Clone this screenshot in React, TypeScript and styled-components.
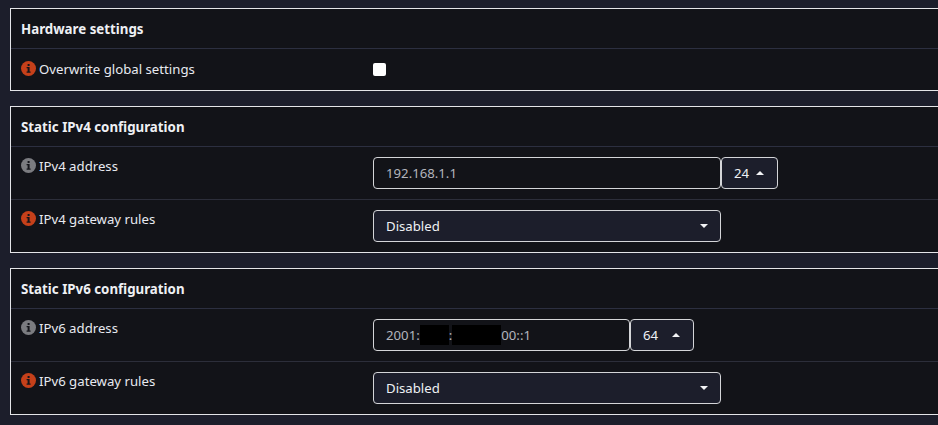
import styled, { createGlobalStyle } from "styled-components";

const GlobalStyle = createGlobalStyle`
  html, body {
    margin: 0;
    height: 100%;
    overflow: hidden;
    background: #1c1e2b;
  }
  body {
    font-family: "Noto Sans", "Open Sans", sans-serif;
    font-size: 13.2px;
    color: #e8eaf0;
  }
`;

const Page = styled.div`
  box-sizing: border-box;
  display: flex;
  flex-direction: column;
  gap: 15px;
  width: 100%;
  padding: 8px 0 0 10px;
`;

const Card = styled.section`
  background: #121318;
  border: 1px solid #e4e5e8;
  border-right: 0;
`;

const CardTitle = styled.h3`
  box-sizing: border-box;
  margin: 0;
  height: 40px;
  padding: 1px 10px 0;
  display: flex;
  align-items: center;
  font-size: 13.3px;
  font-weight: 700;
  color: #eef0f4;
  border-bottom: 1px solid #2c2f40;
`;

const Row = styled.div<{ $divided?: boolean }>`
  display: grid;
  grid-template-columns: 352px 1fr;
  padding: 10px;
  border-top: ${(p) => (p.$divided ? "1px solid #2c2e3a" : "0")};
`;

const Label = styled.div<{ $centered?: boolean }>`
  display: flex;
  align-items: flex-start;
  gap: 3px;
  line-height: 18px;
  color: #e8eaf0;
  padding-top: ${(p) => (p.$centered ? "1px" : "0")};
`;

const Badge = styled.svg`
  flex: none;
  width: 15px;
  height: 15px;
  margin-top: 1px;
`;

const Field = styled.div`
  display: flex;
  align-items: center;
`;

const Check = styled.span`
  display: block;
  width: 13px;
  height: 13px;
  margin: 4px 0;
  background: #ffffff;
  border-radius: 2px;
`;

const TextBox = styled.div<{ $width: number }>`
  box-sizing: border-box;
  width: ${(p) => p.$width}px;
  height: 32px;
  padding: 0 12px;
  display: flex;
  align-items: center;
  color: #b2b5bd;
  border: 1px solid #d4d5d8;
  border-radius: 4px;
`;

const Redacted = styled.span<{ $width: number }>`
  display: inline-block;
  width: ${(p) => p.$width}px;
  height: 20px;
  background: #000000;
`;

const Prefix = styled.button<{ $width: number }>`
  box-sizing: border-box;
  width: ${(p) => p.$width}px;
  height: 32px;
  padding: 0 13px 0 12px;
  display: flex;
  align-items: center;
  justify-content: space-between;
  font: inherit;
  color: #eef0f4;
  background: #1c1e2b;
  border: 1px solid #d4d5d8;
  border-radius: 4px;
`;

const Select = styled.button`
  box-sizing: border-box;
  width: 348px;
  height: 32px;
  padding: 0 12px;
  display: flex;
  align-items: center;
  justify-content: space-between;
  font: inherit;
  color: #eef0f4;
  background: #1c1e2b;
  border: 1px solid #d4d5d8;
  border-radius: 4px;
`;

const Caret = styled.span<{ $up?: boolean }>`
  width: 0;
  height: 0;
  border-left: 4px solid transparent;
  border-right: 4px solid transparent;
  ${(p) => (p.$up ? "border-bottom: 4px solid #f2f3f5;" : "border-top: 4px solid #f2f3f5;")}
`;

const InfoIcon = ({ color }: { color: string }) => (
  <Badge viewBox="0 0 15 15">
    <circle cx="7.5" cy="7.5" r="7.5" fill={color} />
    <rect x="6.6" y="3" width="2" height="2" fill="#14151a" />
    <path d="M5.6 6.1h3v4.4h1v1.2H5.6v-1.2h1V7.3h-1z" fill="#14151a" />
  </Badge>
);

const RED = "#c5401a";
const GREY = "#7b7c80";

export default function App() {
  return (
    <>
      <GlobalStyle />
      <Page>
        <Card>
          <CardTitle>Hardware settings</CardTitle>
          <Row>
            <Label $centered>
              <InfoIcon color={RED} />
              Overwrite global settings
            </Label>
            <Field>
              <Check />
            </Field>
          </Row>
        </Card>

        <Card>
          <CardTitle>Static IPv4 configuration</CardTitle>
          <Row>
            <Label>
              <InfoIcon color={GREY} />
              IPv4 address
            </Label>
            <Field>
              <TextBox $width={348}>192.168.1.1</TextBox>
              <Prefix $width={57}>
                24 <Caret $up />
              </Prefix>
            </Field>
          </Row>
          <Row $divided>
            <Label>
              <InfoIcon color={RED} />
              IPv4 gateway rules
            </Label>
            <Field>
              <Select>
                Disabled <Caret />
              </Select>
            </Field>
          </Row>
        </Card>

        <Card>
          <CardTitle>Static IPv6 configuration</CardTitle>
          <Row>
            <Label>
              <InfoIcon color={GREY} />
              IPv6 address
            </Label>
            <Field>
              <TextBox $width={257}>
                2001:
                <Redacted $width={29} />:
                <Redacted $width={49} />
                00::1
              </TextBox>
              <Prefix $width={64}>
                64 <Caret $up />
              </Prefix>
            </Field>
          </Row>
          <Row $divided>
            <Label>
              <InfoIcon color={RED} />
              IPv6 gateway rules
            </Label>
            <Field>
              <Select>
                Disabled <Caret />
              </Select>
            </Field>
          </Row>
        </Card>
      </Page>
    </>
  );
}
